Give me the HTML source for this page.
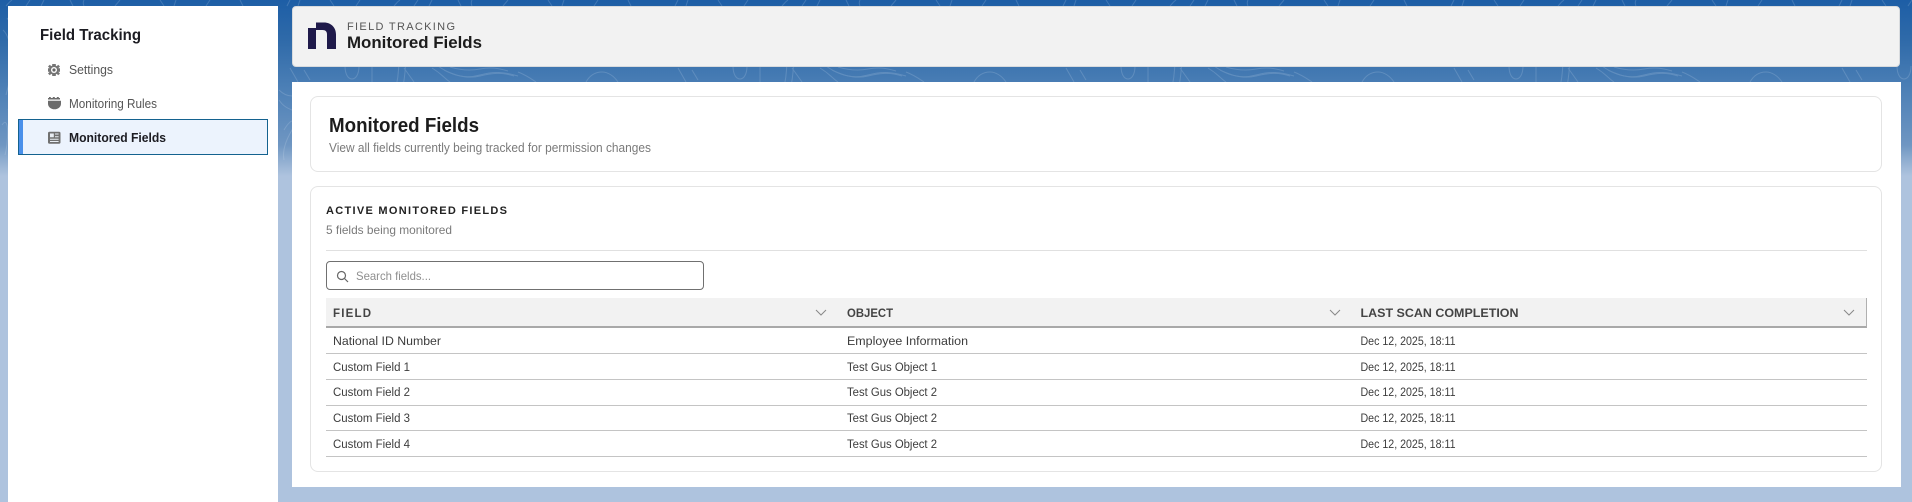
<!DOCTYPE html>
<html lang="en"><head><meta charset="utf-8"><title>Monitored Fields</title>
<style>
html,body{margin:0;padding:0;width:1912px;height:502px;overflow:hidden;background:#aec3de}
body{position:relative;font-family:"Liberation Sans",sans-serif}
.abs{position:absolute;box-sizing:border-box}
#bg{left:0;top:0;width:1912px;height:502px;background:linear-gradient(180deg,#1d5ea6 0,#2f6aa9 40px,#4a7eb5 85px,#6f96c2 145px,#8fadd0 160px,#aec3de 176px,#aec3de 502px)}
svg{position:absolute;left:0;top:0}
</style></head><body>
<div class="abs" id="bg"></div>
<svg width="1912" height="175" viewBox="0 0 1912 175" style="opacity:.17">
<defs><pattern id="c" width="388" height="175" patternUnits="userSpaceOnUse">
<g fill="none" stroke="#e6eff8" stroke-width="1">
<path d="M345 66c0 8 3 13 7 13s7-5 7-13"/>
<path d="M372 66v16"/>
<path d="M56 70c12 6 24 9 36 6s22-4 34 0"/>
<path d="M50 66c14 10 28 13 42 9s24-3 38 1"/>
<path d="M62 67c10 3 20 4 30 2s18-1 28 2"/>
<path d="M44 68c10 6 12 10 18 14"/><path d="M130 72c8 3 12 6 18 10"/>
<path d="M198 82c4-7 10-10 16-10s12 4 16 10"/>
<path d="M290 68l8 14"/><path d="M304 70l6 10"/><path d="M16 68l10 14"/>
<path d="M12 0c-3 2-4 4-6 6M30 0l-4 6M44 0l-3 6M70 0l3 6M84 0c-1 2-1 4 0 6M120 0l-5 6M160 0l4 6M176 0l-2 6M210 0l-4 6M240 0l3 6M290 0l-3 6M300 0l-2 6M330 0l4 6M360 0l-4 6"/>
<path d="M3 30C14 40 12 75 6 95M7 18C22 36 20 80 8 110"/>
<path d="M2 125c8-12 6 20 3 30"/>
<path d="M284 130c8-14 14-10 8 0s-10 20-8 30"/>
<path d="M279 100c4 6 8 8 13 10"/>
<path d="M279 90c4 4 8 6 13 6"/>
</g></pattern></defs>
<rect width="1912" height="175" fill="url(#c)"/>
</svg>

<div class="abs" style="left:8px;top:6px;width:270px;height:496px;background:#fff"></div>
<div class="abs" style="left:18px;top:119px;width:250px;height:36px;background:#ecf3fd;border:1px solid #14628f"></div>
<div class="abs" style="left:19px;top:120px;width:4px;height:34px;background:#4a90ea"></div>

<div class="abs" style="left:292px;top:6px;width:1608px;height:61px;background:#f2f2f2;border:1px solid #d8dbde;border-radius:4px"></div>
<div class="abs" style="left:292px;top:82px;width:1609px;height:405px;background:#fff"></div>
<div class="abs" style="left:310px;top:96px;width:1572px;height:76px;background:#fff;border:1px solid #e4e4e4;border-radius:8px"></div>
<div class="abs" style="left:310px;top:186px;width:1572px;height:286px;background:#fff;border:1px solid #e4e4e4;border-radius:8px"></div>
<div class="abs" style="left:326px;top:250px;width:1541px;height:1px;background:#e0e0e0"></div>
<div class="abs" style="left:326px;top:261px;width:378px;height:29px;background:#fff;border:1px solid #707070;border-radius:4px"></div>
<div class="abs" style="left:326px;top:298px;width:1541px;height:30px;background:#f2f2f2;border-bottom:2px solid #a9a9a9;border-right:1px solid #b0b0b0"></div>
<div class="abs" style="left:326px;top:353px;width:1541px;height:1px;background:#c4c4c4"></div>
<div class="abs" style="left:326px;top:379px;width:1541px;height:1px;background:#c4c4c4"></div>
<div class="abs" style="left:326px;top:405px;width:1541px;height:1px;background:#c4c4c4"></div>
<div class="abs" style="left:326px;top:430px;width:1541px;height:1px;background:#c4c4c4"></div>
<div class="abs" style="left:326px;top:456px;width:1541px;height:1px;background:#c4c4c4"></div>

<svg width="1912" height="502" viewBox="0 0 1912 502" font-family="'Liberation Sans',sans-serif">
<path fill="#1f1a4a" d="M308 28h8v21h-8zM316 22.500h8c7 0 12 5 12 12V49h-9V34.500c0-3-1.500-4.500-4.500-4.500H316z"/>
<!-- gear -->
<g fill="#757575"><circle cx="54" cy="70" r="4.800"/><path d="M52.200 64h3.600v2.400h-3.600zM52.200 73.600h3.600V76h-3.600zM48 66.500l1.800-1.800 2.400 2.400-1.800 1.800zM60 66.500l-1.800-1.800-2.400 2.400 1.800 1.800zM48 73.500l1.800 1.800 2.400-2.400-1.800-1.800zM60 73.500l-1.800 1.800-2.400-2.400 1.800-1.800zM48 68.200h2v3.600h-2zM58 68.200h2v3.600h-2z"/></g><circle cx="54" cy="70" r="3" fill="#fff"/><circle cx="54" cy="70" r="1.600" fill="#666"/>
<!-- monitoring rules -->
<path fill="#6b6b6b" d="M48 100.800h13v2.800c0 3.400-3 5.700-6.500 5.700S48 107 48 103.600z"/><path fill="#6b6b6b" d="M49 97h1.800v1h2V97h2v1h2V97h2v1h1.200v1.500H48V98h1z"/>
<!-- news -->
<rect x="48" y="131.700" width="12.500" height="12" rx="1.500" fill="#707070"/><path fill="#e8edf3" d="M50 133.500h3.800v3.800H50zM55 133.500h3.600v1h-3.600zM55 136.300h3.600v1h-3.600zM50 138.800h8.600v1H50zM50 141h8.600v1H50z"/>
<!-- search -->
<circle cx="341.500" cy="275.500" r="4" fill="none" stroke="#666" stroke-width="1.200"/><path d="M344.500 278.500l3.500 3.500" stroke="#666" stroke-width="1.200"/>
<!-- chevrons -->
<g fill="none" stroke="#888" stroke-width="1"><path d="M816 310l5 5 5-5"/><path d="M1330 310l5 5 5-5"/><path d="M1844 310l5 5 5-5"/></g>

<text x="40" y="40" font-size="15.500" font-weight="700" fill="#1c1c22" textLength="101" lengthAdjust="spacingAndGlyphs">Field Tracking</text>
<text x="69" y="74" font-size="12.500" fill="#555" textLength="44" lengthAdjust="spacingAndGlyphs">Settings</text>
<text x="69" y="108" font-size="12.500" fill="#555" textLength="88" lengthAdjust="spacingAndGlyphs">Monitoring Rules</text>
<text x="69" y="142" font-size="12.500" font-weight="700" fill="#1c1c22" textLength="97" lengthAdjust="spacingAndGlyphs">Monitored Fields</text>
<text x="347" y="30" font-size="11" fill="#555" textLength="108" lengthAdjust="spacing">FIELD TRACKING</text>
<text x="347" y="48" font-size="17" font-weight="700" fill="#1c1c1c" textLength="135" lengthAdjust="spacingAndGlyphs">Monitored Fields</text>
<text x="329" y="132" font-size="20" font-weight="700" fill="#1c1c1c" textLength="150" lengthAdjust="spacingAndGlyphs">Monitored Fields</text>
<text x="329" y="152" font-size="12.500" fill="#7a7a7a" textLength="322" lengthAdjust="spacingAndGlyphs">View all fields currently being tracked for permission changes</text>
<text x="326" y="214" font-size="11" font-weight="700" fill="#222" textLength="181" lengthAdjust="spacing">ACTIVE MONITORED FIELDS</text>
<text x="326" y="234" font-size="12" fill="#7a7a7a" textLength="126" lengthAdjust="spacingAndGlyphs">5 fields being monitored</text>
<text x="356" y="280" font-size="12" fill="#8f8f8f" textLength="75" lengthAdjust="spacingAndGlyphs">Search fields...</text>
<g font-size="11.500" font-weight="700" fill="#444">
<text x="333" y="317" textLength="38" lengthAdjust="spacing">FIELD</text>
<text x="847" y="317" textLength="46" lengthAdjust="spacingAndGlyphs">OBJECT</text>
<text x="1360.500" y="317" textLength="158" lengthAdjust="spacingAndGlyphs">LAST SCAN COMPLETION</text>
</g>
<g font-size="12.300" fill="#3c3c3c">
<text x="333" y="345" textLength="108" lengthAdjust="spacingAndGlyphs">National ID Number</text>
<text x="847" y="345" textLength="121" lengthAdjust="spacingAndGlyphs">Employee Information</text>
<text x="1360.500" y="345" textLength="95" lengthAdjust="spacingAndGlyphs">Dec 12, 2025, 18:11</text>
<text x="333" y="371" textLength="77" lengthAdjust="spacingAndGlyphs">Custom Field 1</text>
<text x="847" y="371" textLength="90" lengthAdjust="spacingAndGlyphs">Test Gus Object 1</text>
<text x="1360.500" y="371" textLength="95" lengthAdjust="spacingAndGlyphs">Dec 12, 2025, 18:11</text>
<text x="333" y="396" textLength="77" lengthAdjust="spacingAndGlyphs">Custom Field 2</text>
<text x="847" y="396" textLength="90" lengthAdjust="spacingAndGlyphs">Test Gus Object 2</text>
<text x="1360.500" y="396" textLength="95" lengthAdjust="spacingAndGlyphs">Dec 12, 2025, 18:11</text>
<text x="333" y="422" textLength="77" lengthAdjust="spacingAndGlyphs">Custom Field 3</text>
<text x="847" y="422" textLength="90" lengthAdjust="spacingAndGlyphs">Test Gus Object 2</text>
<text x="1360.500" y="422" textLength="95" lengthAdjust="spacingAndGlyphs">Dec 12, 2025, 18:11</text>
<text x="333" y="448" textLength="77" lengthAdjust="spacingAndGlyphs">Custom Field 4</text>
<text x="847" y="448" textLength="90" lengthAdjust="spacingAndGlyphs">Test Gus Object 2</text>
<text x="1360.500" y="448" textLength="95" lengthAdjust="spacingAndGlyphs">Dec 12, 2025, 18:11</text>
</g>
</svg>
</body></html>
